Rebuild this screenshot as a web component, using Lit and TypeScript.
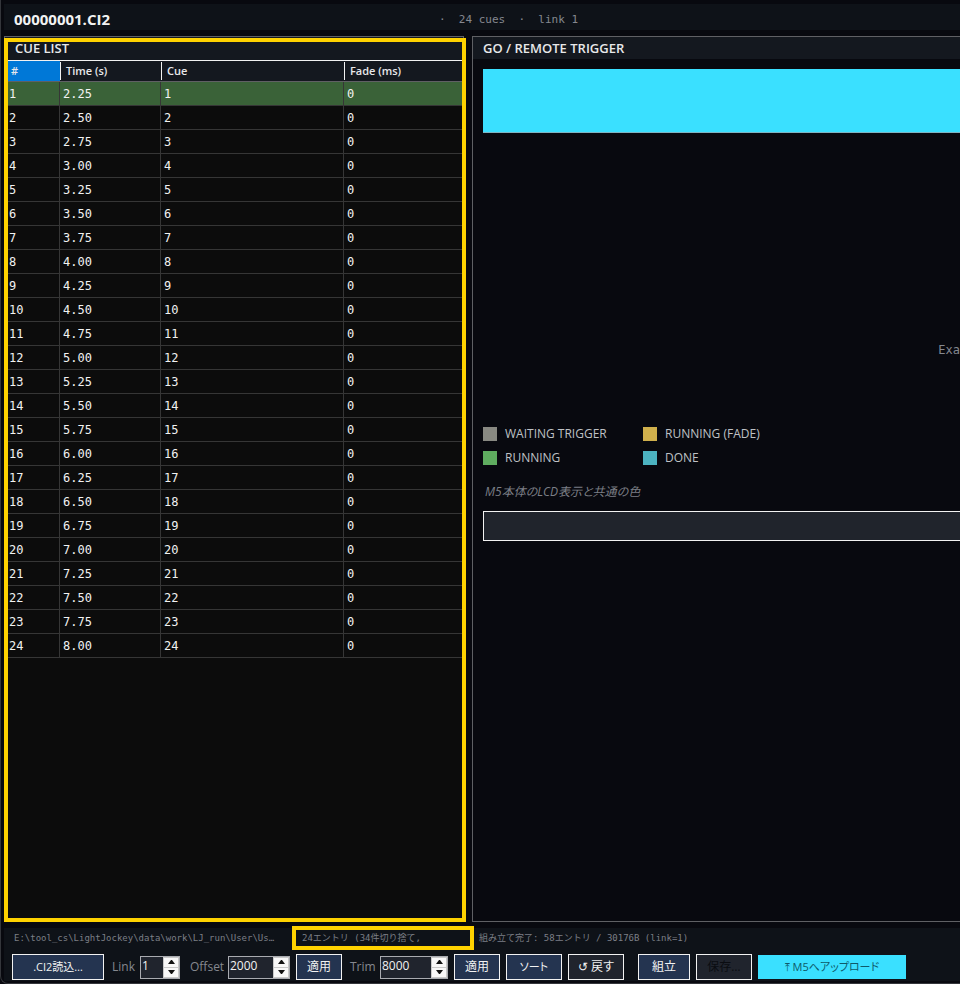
import { LitElement, html, css } from "lit";
import { customElement, property, state } from "lit/decorators.js";
import { classMap } from "lit/directives/class-map.js";

interface Cue {
  index: number;
  time: string;
  cue: number;
  fade: number;
}

const cues: Cue[] = Array.from({ length: 24 }, (_, i) => ({
  index: i + 1,
  time: (2.25 + i * 0.25).toFixed(2),
  cue: i + 1,
  fade: 0,
}));

const legend = [
  { kind: "waiting", label: "WAITING TRIGGER" },
  { kind: "fade", label: "RUNNING (FADE)" },
  { kind: "running", label: "RUNNING" },
  { kind: "done", label: "DONE" },
];

@customElement("number-field")
class NumberField extends LitElement {
  @property() label = "";
  @property({ type: Number }) value = 0;
  @property({ type: Number }) step = 1;

  static styles = css`
    :host {
      display: inline-flex;
      flex: none;
      align-items: center;
      justify-content: space-between;
    }
    label {
      color: #85888f;
    }
    .box {
      display: flex;
      box-sizing: border-box;
      width: var(--box-width, 40px);
      height: 23px;
      border: 1px solid #a9abb0;
      background: #20242d;
    }
    input {
      flex: 1;
      min-width: 0;
      padding: 0 0 3px 1px;
      border: 0;
      outline: 0;
      background: none;
      color: #f2f2f2;
      font: 12px "Open Sans", sans-serif;
      appearance: textfield;
    }
    input::-webkit-inner-spin-button {
      display: none;
    }
    .spin {
      display: grid;
      box-sizing: border-box;
      width: 16px;
      padding: 1px;
      gap: 1px;
      background: #c9c9c9;
    }
    .spin button {
      display: grid;
      place-items: center;
      padding: 0;
      border: 0;
      background: #f8f8f8;
    }
    svg {
      display: block;
      width: 7px;
      height: 4px;
    }
  `;

  render() {
    return html`
      <label for="n">${this.label}</label>
      <span class="box">
        <input id="n" type="number" .value=${String(this.value)} />
        <span class="spin">
          <button aria-label="Increase" @click=${() => (this.value += this.step)}>
            <svg viewBox="0 0 7 4"><path d="M0 4 3 0h1l3 4z" fill="#111" /></svg>
          </button>
          <button aria-label="Decrease" @click=${() => (this.value -= this.step)}>
            <svg viewBox="0 0 7 4"><path d="M0 0 3 4h1l3-4z" fill="#111" /></svg>
          </button>
        </span>
      </span>
    `;
  }
}

@customElement("app-root")
class AppRoot extends LitElement {
  @state() private current = 1;

  static styles = css`
    :host {
      --mono: "DejaVu Sans Mono", "Noto Sans CJK JP", monospace;
      --ui: "Open Sans", "Noto Sans CJK JP", sans-serif;
      display: block;
      background: #08090f;
      color: #f2f2f2;
      font: 12px/16px var(--ui);
      font-feature-settings: "palt";
    }
    * {
      box-sizing: border-box;
    }
    .window {
      display: flex;
      flex-direction: column;
      gap: 6px;
      min-height: 100vh;
      padding: 4px 0 2px 3px;
      border-left: 1px solid #34363b;
      border-bottom: 1px solid #34363b;
      border-bottom-left-radius: 8px;
      background: #08090f;
      overflow: hidden;
    }
    header {
      display: flex;
      align-items: center;
      height: 26px;
      padding: 4px 10px 0;
      background: #0e1218;
    }
    h1 {
      flex: 0 0 425px;
      margin: 0;
      font-size: 15px;
      line-height: 20px;
      font-weight: 700;
    }
    .meta {
      padding-top: 1px;
      color: #85888f;
      font: 11px/16px var(--mono);
      white-space: pre;
    }
    main {
      flex: 1;
      display: flex;
      gap: 8px;
    }
    .panel {
      border: 1px solid #5f6064;
    }
    h2 {
      margin: 0;
      padding: 0 10px;
      background: #14181f;
      color: #e8e8ea;
      font-size: 13px;
      line-height: 22px;
      font-weight: 600;
    }
    .list {
      position: relative;
      flex: 0 0 460px;
      background: #0c0c0c;
    }
    .list::after {
      content: "";
      position: absolute;
      inset: 1px -3px -1px -1px;
      border: 4px solid #ffd200;
      pointer-events: none;
    }
    .list h2 {
      line-height: 23px;
    }
    table {
      width: 100%;
      table-layout: fixed;
      border-collapse: separate;
      border-spacing: 0;
      border-top: 1px solid #f2f2f2;
    }
    .c-index {
      width: 55px;
    }
    .c-time {
      width: 101px;
    }
    .c-cue {
      width: 183px;
    }
    th {
      height: 21px;
      padding: 0;
      border-bottom: 1px solid #5f6064;
      background: #14181f;
      color: #e8e8ea;
      font-size: 11px;
      font-weight: 600;
      line-height: 18px;
      text-align: left;
    }
    th span {
      display: block;
      padding-left: 5px;
      border-left: 1px solid #f2f2f2;
    }
    th.sorted {
      background: #0078d7;
    }
    th.sorted span {
      border-color: transparent;
    }
    td {
      height: 24px;
      padding: 0 3px;
      border-right: 1px solid #363636;
      border-bottom: 1px solid #363636;
      font: 12px/16px var(--mono);
    }
    td:first-child {
      padding-left: 4px;
    }
    .active td {
      background: #3a6238;
    }
    .trigger {
      flex: 1;
      min-width: 0;
      border-right: 0;
    }
    .body {
      display: flex;
      flex-direction: column;
      padding: 10px 0 10px 10px;
    }
    .go {
      height: 64px;
      border: 0;
      border-bottom: 1px solid #7fb4c2;
      background: #3ae0ff;
    }
    .example {
      align-self: flex-end;
      margin-top: 208px;
      color: #85888f;
      font: 12px/18px var(--mono);
      white-space: nowrap;
    }
    ul {
      display: grid;
      grid-template-columns: 160px 160px;
      margin: 63px 0 0;
      padding: 0;
      list-style: none;
      color: #bfc1c5;
    }
    li {
      display: flex;
      align-items: center;
      gap: 8px;
      height: 24px;
    }
    .swatch {
      width: 14px;
      height: 14px;
    }
    .waiting {
      background: #888982;
    }
    .fade {
      background: #d0b04c;
    }
    .running {
      background: #5fad60;
    }
    .done {
      background: #4cb3c1;
    }
    .note {
      margin: 14px 0 11px;
      padding-left: 2px;
      color: #7c7f86;
      font-style: italic;
    }
    .bar {
      height: 30px;
      border: 1px solid #f2f2f2;
      border-right: 0;
      background: #20242c;
    }
    footer {
      background: #0e1218;
      padding-bottom: 1px;
    }
    .status {
      display: flex;
      height: 20px;
      padding-left: 10px;
      color: #7c7f86;
      font: 9px/20px var(--mono);
      font-feature-settings: normal;
      white-space: nowrap;
    }
    .path {
      flex: 0 0 278px;
    }
    .result {
      position: relative;
      flex: 0 0 182px;
      padding-left: 10px;
    }
    .result::after {
      content: "";
      position: absolute;
      inset: -2px 0;
      border: 4px solid #ffd200;
    }
    .built {
      padding-left: 5px;
    }
    .tools {
      display: flex;
      align-items: center;
      gap: 6px;
      padding: 6px 8px 0;
    }
    .tools button {
      flex: none;
      height: 26px;
      padding: 0;
      border: 1px solid #f2f2f2;
      background: #243450;
      color: #f2f2f2;
      font: 12px/16px var(--ui);
      font-feature-settings: "palt";
      white-space: nowrap;
    }
    .tools .plain {
      background: #20242d;
    }
    .tools .plain:disabled {
      color: #0a0c11;
    }
    .tools .compact {
      font-size: 11px;
    }
    .tools .upload {
      height: 24px;
      border: 0;
      background: #3ae0ff;
      color: #0e5a6a;
    }
    .w46 {
      width: 46px;
    }
    .w52 {
      width: 52px;
    }
    .w56 {
      width: 56px;
    }
    .w92 {
      width: 92px;
    }
    .w148 {
      width: 148px;
    }
    .f-link {
      width: 68px;
      margin: 0 4px 0 2px;
    }
    .f-offset {
      width: 100px;
      --box-width: 62px;
    }
    .f-trim {
      width: 98px;
      margin-left: 2px;
      --box-width: 68px;
    }
    .gap {
      margin-left: 8px;
    }
  `;

  render() {
    return html`
      <div class="window">
        <header>
          <h1>00000001.CI2</h1>
          <span class="meta">·  24 cues  ·  link 1</span>
        </header>
        <main>
          <section class="panel list">
            <h2>CUE LIST</h2>
            <table>
              <colgroup>
                <col class="c-index" />
                <col class="c-time" />
                <col class="c-cue" />
                <col />
              </colgroup>
              <thead>
                <tr>
                  <th class="sorted"><span>#</span></th>
                  <th><span>Time (s)</span></th>
                  <th><span>Cue</span></th>
                  <th><span>Fade (ms)</span></th>
                </tr>
              </thead>
              <tbody>
                ${cues.map(
                  (c) => html`<tr
                    class=${classMap({ active: c.index === this.current })}
                    @click=${() => (this.current = c.index)}
                  >
                    <td>${c.index}</td>
                    <td>${c.time}</td>
                    <td>${c.cue}</td>
                    <td>${c.fade}</td>
                  </tr>`
                )}
              </tbody>
            </table>
          </section>
          <section class="panel trigger">
            <h2>GO / REMOTE TRIGGER</h2>
            <div class="body">
              <button class="go" aria-label="GO"></button>
              <div class="example">Exa</div>
              <ul>
                ${legend.map(
                  (l) => html`<li><span class="swatch ${l.kind}"></span>${l.label}</li>`
                )}
              </ul>
              <p class="note">M5本体のLCD表示と共通の色</p>
              <div class="bar"></div>
            </div>
          </section>
        </main>
        <footer>
          <div class="status">
            <span class="path">E:\\tool_cs\\LightJockey\\data\\work\\LJ_run\\User\\Us…</span>
            <span class="result">24エントリ (34件切り捨て,</span>
            <span class="built">組み立て完了: 58エントリ / 30176B (link=1)</span>
          </div>
          <div class="tools">
            <button class="w92 compact">.CI2読込…</button>
            <number-field class="f-link" label="Link" .value=${1}></number-field>
            <number-field class="f-offset" label="Offset" .value=${2000} .step=${100}></number-field>
            <button class="w46">適用</button>
            <number-field class="f-trim" label="Trim" .value=${8000} .step=${100}></number-field>
            <button class="w46">適用</button>
            <button class="w56 compact">ソート</button>
            <button class="w56 plain">↺ 戻す</button>
            <button class="w52 gap">組立</button>
            <button class="w56 plain" disabled>保存…</button>
            <button class="w148 upload compact">⤒ M5へアップロード</button>
          </div>
        </footer>
      </div>
    `;
  }
}
